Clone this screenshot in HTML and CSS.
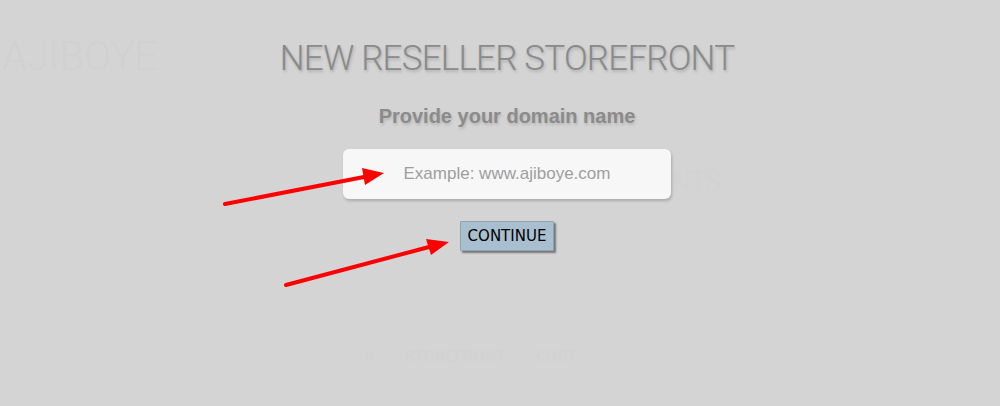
FILE: index.html
```html
<!DOCTYPE html>
<html>
<head>
<meta charset="utf-8">
<link rel="stylesheet" href="styles.css">
</head>
<body>
<div class="backdrop">
  <div class="ghost ghost-brand">AJIBOYE</div>
  <div class="ghost ghost-nts">NTS</div>
  <div class="ghost ghost-cost"><span>A</span><span>STOREFRONT</span><span>COST</span></div>
</div>
<main class="modal">
  <h1 class="title">NEW RESELLER STOREFRONT</h1>
  <p class="subtitle">Provide your domain name</p>
  <input class="domain" type="text" placeholder="Example: www.ajiboye.com">
  <button class="continue">CONTINUE</button>
</main>
<svg class="arrows" width="1000" height="406" viewBox="0 0 1000 406">
  <line x1="225" y1="204" x2="364" y2="177" stroke="#ff0000" stroke-width="4" stroke-linecap="round"/>
  <polygon points="384,173 365,185 362,168" fill="#ff0000"/>
  <line x1="286" y1="285" x2="429" y2="247" stroke="#ff0000" stroke-width="4" stroke-linecap="round"/>
  <polygon points="449,242 431,255 426,239" fill="#ff0000"/>
</svg>
</body>
</html>
```

FILE: styles.css
```css
html, body {
  margin: 0;
  padding: 0;
  width: 1000px;
  height: 406px;
  overflow: hidden;
  background: #d4d4d4;
}

.backdrop {
  position: absolute;
  inset: 0;
}

.ghost {
  position: absolute;
  color: #d1d1d1;
  font-family: "Roboto", "Liberation Sans", sans-serif;
  font-weight: 300;
}

.ghost-brand {
  left: 2px;
  top: 33px;
  font-size: 40px;
}

.ghost-nts {
  left: 672px;
  top: 166px;
  font-size: 26px;
  color: #d2d2d2;
}

.ghost-cost {
  left: 364px;
  top: 347px;
  font-size: 16px;
  font-weight: 700;
  display: flex;
  gap: 30px;
  color: #d2d2d2;
}

.modal {
  position: relative;
  display: flex;
  flex-direction: column;
  align-items: center;
  padding-top: 38px;
  padding-left: 14px;
}

.title {
  margin: 0;
  font-family: "Roboto", "Liberation Sans", sans-serif;
  font-weight: 300;
  font-size: 35px;
  line-height: 42px;
  letter-spacing: -0.8px;
  color: #8a8a8a;
  text-shadow: 1px 2px 3px rgba(0, 0, 0, 0.18);
}

.subtitle {
  margin: 25px 0 0;
  font-family: "Liberation Sans", Arial, sans-serif;
  font-weight: 700;
  font-size: 20px;
  line-height: 22px;
  color: #8b8b8b;
  text-shadow: 1px 2px 3px rgba(0, 0, 0, 0.15);
}

.domain {
  margin-top: 22px;
  width: 328px;
  height: 50px;
  box-sizing: border-box;
  border: none;
  border-radius: 6px;
  background: #f7f7f7;
  box-shadow: 1px 2px 3px rgba(0, 0, 0, 0.2);
  text-align: center;
  font-family: "Liberation Sans", Arial, sans-serif;
  font-size: 17px;
  color: #555;
  outline: none;
}

.domain::placeholder {
  color: #9e9e9e;
}

.continue {
  margin-top: 22px;
  width: 94px;
  height: 30px;
  padding: 0;
  background: #a8bfd0;
  border: 1px solid #8fa3b2;
  border-radius: 1px;
  box-shadow: 2px 2px 2px rgba(0, 0, 0, 0.45);
  font-family: "DejaVu Sans", "Liberation Sans", sans-serif;
  font-size: 15px;
  letter-spacing: 0;
  color: #000;
}

.arrows {
  position: absolute;
  left: 0;
  top: 0;
}
```
